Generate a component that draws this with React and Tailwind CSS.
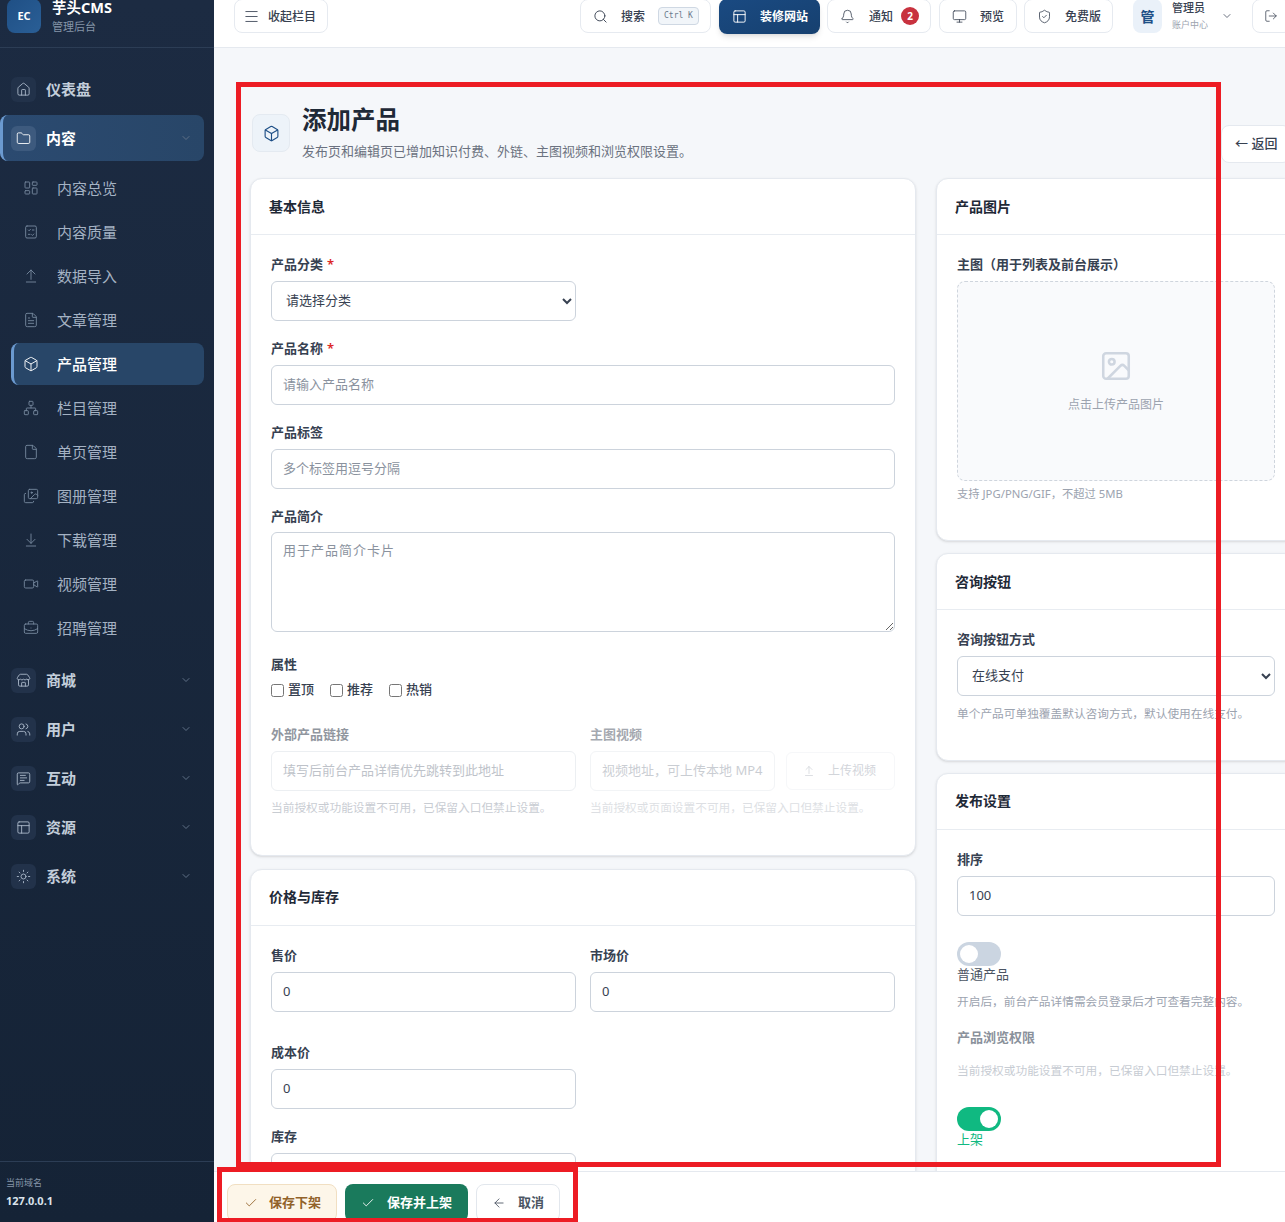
import React from "react";
import {
  Home, Folder, LayoutDashboard, ArrowUpFromLine, FileText, Box, Network, File, Images, ArrowDownToLine,
  Video, BriefcaseBusiness, Store, Users, MessageSquareText, PanelsTopLeft, Sun, ChevronDown, Menu,
  Search, Bell, Monitor, ShieldCheck, LogOut, Check, ArrowLeft, Image as ImageIcon,
} from "lucide-react";

const FONT = { fontFamily: '"Noto Sans", "Noto Sans CJK SC", sans-serif' };

function ChecklistIcon() {
  return (
    <svg width="16" height="16" viewBox="0 0 24 24" fill="none" stroke="currentColor" strokeWidth="1.4" strokeLinecap="round" strokeLinejoin="round">
      <rect x="4" y="3" width="16" height="18" rx="2" />
      <path d="M8 9l1.2 1.2 2-2.2M14 9h2.5M8 15.5h2.5M13 16l1.2 1.2 2-2.2" />
    </svg>
  );
}

function TopItem({ icon: Icon, label, active, noChevron }) {
  return (
    <div className={`flex items-center h-[46px] shrink-0 rounded-lg ${active ? "bg-gradient-to-r from-[#2b4a70] to-[#284668] border-l-[3px] border-[#6b9ad0] pl-2" : "pl-[11px]"} pr-[12px]`}>
      <span className={`w-[25px] h-[25px] rounded-md flex items-center justify-center ${active ? "bg-[#3d5a7e] text-white" : "bg-[#22324a] text-[#aebccd]"}`}>
        <Icon size={15} strokeWidth={1.4} />
      </span>
      <span className={`ml-[10px] text-[15px] font-bold ${active ? "text-white" : "text-[#c3ceda]"}`}>{label}</span>
      {!noChevron && <ChevronDown size={12} className="ml-auto text-[#5f7086]" />}
    </div>
  );
}

function SubItem({ icon: Icon, label, active }) {
  return (
    <div className={`flex items-center h-[42px] shrink-0 rounded-lg ml-[11px] ${active ? "bg-[#284668] border-l-[3px] border-[#6b9ad0] pl-[9px]" : "pl-[12px]"}`}>
      <span className={`w-[16px] flex justify-center ${active ? "text-white" : "text-[#74869c]"}`}>
        <Icon size={16} strokeWidth={1.4} />
      </span>
      <span className={`ml-[18px] text-[15px] ${active ? "text-white font-medium" : "text-[#a4b2c3]"}`}>{label}</span>
    </div>
  );
}

function Sidebar() {
  return (
    <aside className="w-[214px] shrink-0 h-full flex flex-col bg-gradient-to-b from-[#1c2b42] to-[#152336]">
      <div className="h-[48px] shrink-0 border-b border-[#2c3d55] pl-[7px] flex items-start overflow-hidden">
        <div className="-mt-px w-[34px] h-[34px] rounded-lg bg-gradient-to-br from-[#1f4f85] to-[#2a5f96] flex items-center justify-center text-white text-[11px] font-bold">EC</div>
        <div className="ml-[11px] -mt-[3px]">
          <div className="text-[14.5px] leading-[20px] font-bold text-white">芋头CMS</div>
          <div className="text-[11px] leading-[14px] mt-[3px] text-[#8595a8]">管理后台</div>
        </div>
      </div>
      <nav className="flex-1 pt-[18px] pr-[10px] flex flex-col overflow-hidden">
        <TopItem icon={Home} label="仪表盘" noChevron />
        <div className="h-[3px] shrink-0" />
        <TopItem icon={Folder} label="内容" active />
        <div className="flex flex-col gap-[2px] mt-[6px] mb-[8px]">
          <SubItem icon={LayoutDashboard} label="内容总览" />
          <SubItem icon={ChecklistIcon} label="内容质量" />
          <SubItem icon={ArrowUpFromLine} label="数据导入" />
          <SubItem icon={FileText} label="文章管理" />
          <SubItem icon={Box} label="产品管理" active />
          <SubItem icon={Network} label="栏目管理" />
          <SubItem icon={File} label="单页管理" />
          <SubItem icon={Images} label="图册管理" />
          <SubItem icon={ArrowDownToLine} label="下载管理" />
          <SubItem icon={Video} label="视频管理" />
          <SubItem icon={BriefcaseBusiness} label="招聘管理" />
        </div>
        <div className="flex flex-col gap-[3px]">
          <TopItem icon={Store} label="商城" />
          <TopItem icon={Users} label="用户" />
          <TopItem icon={MessageSquareText} label="互动" />
          <TopItem icon={PanelsTopLeft} label="资源" />
          <TopItem icon={Sun} label="系统" />
        </div>
      </nav>
      <div className="h-[61px] shrink-0 border-t border-[#2c3d55] pl-[6px] pt-[13px]">
        <div className="text-[9px] leading-[16px] text-[#8595a8]">当前域名</div>
        <div className="text-[11px] leading-[16px] mt-[2px] font-bold text-[#dbe3ec]">127.0.0.1</div>
      </div>
    </aside>
  );
}

function HeadBtn({ children, className = "" }) {
  return <div className={`h-[34px] -mt-px rounded-lg border border-[#e6eaf0] bg-white flex items-center text-[12px] font-medium text-[#374151] shrink-0 ${className}`}>{children}</div>;
}

function Header() {
  return (
    <header className="h-[48px] shrink-0 bg-white border-b border-[#e5e9ef] flex items-start pl-[20px] relative overflow-hidden">
      <HeadBtn className="w-[94px] pl-[8px]">
        <Menu size={17} strokeWidth={1.2} />
        <span className="ml-[8px] mt-px">收起栏目</span>
      </HeadBtn>
      <div className="ml-[252px] flex items-start">
        <HeadBtn className="w-[131px] pl-[12px] bg-[#f8fafc]">
          <Search size={15} strokeWidth={1.5} />
          <span className="ml-[13px] mt-[2px]">搜索</span>
          <span className="ml-[13px] h-[18px] px-[5px] rounded border border-[#cfd8e3] bg-[#f1f5f9] text-[8px] text-[#6b7a8c] flex items-center" style={{ fontFamily: '"DejaVu Sans Mono", monospace' }}>Ctrl K</span>
        </HeadBtn>
        <div className="ml-[8px] -mt-px w-[101px] h-[35px] rounded-lg bg-gradient-to-br from-[#1a4a82] to-[#16406f] shadow-md flex items-center pl-[13px] text-white text-[12px] font-bold shrink-0">
          <PanelsTopLeft size={15} strokeWidth={1.5} />
          <span className="ml-[13px]">装修网站</span>
        </div>
        <HeadBtn className="ml-[7px] w-[104px] pl-[12px]">
          <Bell size={15} strokeWidth={1.3} />
          <span className="ml-[14px] mt-[2px]">通知</span>
          <span className="ml-[8px] w-[18px] h-[18px] rounded-full bg-[#c8323f] text-white text-[10px] font-bold flex items-center justify-center">2</span>
        </HeadBtn>
        <HeadBtn className="ml-[8px] w-[78px] pl-[12px]">
          <Monitor size={15} strokeWidth={1.3} />
          <span className="ml-[13px] mt-[2px]">预览</span>
        </HeadBtn>
        <HeadBtn className="ml-[7px] w-[89px] pl-[12px]">
          <ShieldCheck size={15} strokeWidth={1.3} />
          <span className="ml-[13px] mt-[2px]">免费版</span>
        </HeadBtn>
        <div className="ml-[20px] flex items-center h-[34px] -mt-px shrink-0">
          <span className="w-[29px] h-[34px] rounded-lg bg-[#eaf1f9] text-[#1d4f86] text-[14px] font-bold flex items-center justify-center">管</span>
          <div className="ml-[10px] w-[48px]">
            <div className="text-[11px] leading-[14px] -mt-px font-medium text-[#374151]">管理员</div>
            <div className="text-[9px] leading-[12px] mt-[4px] text-[#9ca3af]">账户中心</div>
          </div>
          <ChevronDown size={12} className="ml-[1px] text-[#6b7280]" />
        </div>
        <HeadBtn className="ml-[19px] w-[40px] pl-[11px]"><LogOut size={14} strokeWidth={1.3} /></HeadBtn>
      </div>
    </header>
  );
}

function Card({ title, className = "", titleClass = "", children }) {
  return (
    <section className={`rounded-xl border border-[#e5e9ef] bg-white shadow-sm shrink-0 ${className}`}>
      <div className={`h-[56px] border-b border-[#e8ecf1] flex items-center pl-[18px] text-[14px] font-bold text-[#1f2937] ${titleClass}`}>{title}</div>
      <div className="px-[20px] pt-[19px]">{children}</div>
    </section>
  );
}

function Label({ children, required, muted, className = "" }) {
  return (
    <div className={`h-[20px] leading-[20px] text-[13px] font-semibold mb-[7px] ${muted ? "text-[#9097a1]" : "text-[#374151]"} ${className}`}>
      {children}
      {required && <span className="ml-[4px] text-[#dc2626]">*</span>}
    </div>
  );
}

const inputBase = "block h-[40px] rounded-md border bg-white px-[11px] pb-[2px] text-[13px] text-[#374151] placeholder:text-[#8a929e] outline-none";
const inputCls = `${inputBase} w-full border-[#ccd3dc]`;

function Field({ label, required, placeholder, value, className = "" }) {
  return (
    <div className={className}>
      <Label required={required}>{label}</Label>
      <input className={inputCls} placeholder={placeholder} defaultValue={value} />
    </div>
  );
}

function LeftColumn() {
  return (
    <div className="w-[666px] shrink-0 flex flex-col gap-[13px]">
      <Card title="基本信息" className="h-[678px]">
        <Label required>产品分类</Label>
        <select className="block w-[305px] h-[40px] rounded-md border border-[#ccd3dc] bg-white pl-[10px] pb-[2px] text-[13px] text-[#374151] outline-none mb-[17px]" defaultValue="">
          <option value="">请选择分类</option>
        </select>
        <Field label="产品名称" required placeholder="请输入产品名称" className="mb-[17px]" />
        <Field label="产品标签" placeholder="多个标签用逗号分隔" className="mb-[17px]" />
        <div className="h-[20px] leading-[20px] text-[13px] font-semibold mb-[6px] text-[#374151]">产品简介</div>
        <textarea className="block w-full h-[100px] rounded-md border border-[#ccd3dc] bg-white px-[11px] py-[8px] text-[13px] tracking-[1px] text-[#374151] placeholder:text-[#8a929e] outline-none mb-[22px]" placeholder="用于产品简介卡片" />
        <div className="h-[20px] leading-[20px] text-[13px] font-semibold mb-[6px] text-[#374151]">属性</div>
        <div className="flex items-center gap-[16px] h-[20px] mb-[24px] text-[13px] font-medium text-[#374151]">
          {["置顶", "推荐", "热销"].map((t) => (
            <label key={t} className="flex items-center gap-[4px]">
              <input type="checkbox" className="w-[13px] h-[13px] m-0" />
              {t}
            </label>
          ))}
        </div>
        <div className="flex gap-[14px]">
          <div className="w-[305px] opacity-55">
            <Label>外部产品链接</Label>
            <input disabled className={`${inputBase} w-full border-[#dde2e8]`} placeholder="填写后前台产品详情优先跳转到此地址" />
            <div className="mt-[7px] text-[11.7px] leading-[18px] text-[#9ca3af] whitespace-nowrap">当前授权或功能设置不可用，已保留入口但禁止设置。</div>
          </div>
          <div className="w-[305px] opacity-45">
            <Label>主图视频</Label>
            <div className="flex gap-[11px]">
              <input disabled className={`${inputBase} w-[185px] border-[#e3e7ec]`} placeholder="视频地址，可上传本地 MP4" />
              <div className="w-[109px] h-[38px] mt-px rounded-md border border-[#eceff3] flex items-center pl-[16px] text-[12px] text-[#9ca3af] whitespace-nowrap">
                <ArrowUpFromLine size={12} strokeWidth={1.5} />
                <span className="ml-[13px]">上传视频</span>
              </div>
            </div>
            <div className="mt-[7px] text-[11.7px] leading-[18px] text-[#b4bac3] whitespace-nowrap">当前授权或页面设置不可用，已保留入口但禁止设置。</div>
          </div>
        </div>
      </Card>
      <Card title="价格与库存" className="h-[400px]" titleClass="pb-[2px]">
        <div className="grid grid-cols-[305px_305px] gap-x-[14px] mb-[30px]">
          <Field label="售价" value="0" />
          <Field label="市场价" value="0" />
        </div>
        <Field label="成本价" value="0" className="w-[305px] mb-[17px]" />
        <Field label="库存" value="0" className="w-[305px]" />
      </Card>
    </div>
  );
}

function Toggle({ on }) {
  return (
    <div className={`w-[44px] h-[24px] rounded-full p-[3px] flex ${on ? "bg-[#10b981] justify-end" : "bg-[#cbd5e1]"}`}>
      <span className="w-[18px] h-[18px] rounded-full bg-white" />
    </div>
  );
}

function RightColumn() {
  return (
    <div className="w-[360px] shrink-0 flex flex-col gap-[12px]">
      <Card title="产品图片" className="h-[363px]">
        <Label>主图（用于列表及前台展示）</Label>
        <div className="w-[318px] h-[200px] rounded-lg border border-dashed border-[#cfd5dd] bg-[#f9fafc] flex flex-col items-center justify-center">
          <ImageIcon size={34} strokeWidth={1.8} className="text-[#cfd6e0]" />
          <div className="mt-[13px] text-[12px] leading-[18px] text-[#9ca3af]">点击上传产品图片</div>
        </div>
        <div className="mt-[4px] text-[11.3px] leading-[18px] text-[#9ca3af]">支持 JPG/PNG/GIF，不超过 5MB</div>
      </Card>
      <Card title="咨询按钮" className="h-[208px]">
        <Label>咨询按钮方式</Label>
        <select className="block w-[318px] h-[40px] rounded-md border border-[#ccd3dc] bg-white pl-[10px] pb-[2px] text-[13px] text-[#374151] outline-none" defaultValue="在线支付">
          <option>在线支付</option>
        </select>
        <div className="mt-[8px] text-[11.7px] leading-[18px] text-[#9ca3af] whitespace-nowrap">单个产品可单独覆盖默认咨询方式，默认使用在线支付。</div>
      </Card>
      <Card title="发布设置" className="h-[500px]" titleClass="pb-[2px]">
        <Label>排序</Label>
        <input className={`${inputBase} w-[318px] border-[#ccd3dc]`} defaultValue="100" />
        <div className="mt-[26px]"><Toggle /></div>
        <div className="text-[13px] leading-[16px] text-[#4b5563]">普通产品</div>
        <div className="mt-[10px] text-[11.7px] leading-[18px] text-[#9ca3af] whitespace-nowrap">开启后，前台产品详情需会员登录后才可查看完整内容。</div>
        <div className="mt-[17px] h-[20px] leading-[20px] text-[13px] font-semibold text-[#8a919b]">产品浏览权限</div>
        <div className="mt-[14px] text-[11.7px] leading-[18px] text-[#c7ccd3] whitespace-nowrap">当前授权或功能设置不可用，已保留入口但禁止设置。</div>
        <div className="mt-[28px]"><Toggle on /></div>
        <div className="text-[13px] leading-[16px] text-[#10b981]">上架</div>
      </Card>
    </div>
  );
}

function FootBtn({ icon: Icon, children, className = "", gap = "ml-[12px]" }) {
  return (
    <div className={`h-[38px] rounded-lg flex items-center text-[13px] font-semibold shrink-0 ${className}`}>
      <Icon size={14} strokeWidth={1.5} />
      <span className={gap}>{children}</span>
    </div>
  );
}

export default function App() {
  return (
    <div className="relative w-[1285px] h-[1222px] overflow-hidden flex bg-[#f5f7fa]" style={FONT}>
      <Sidebar />
      <main className="flex-1 min-w-0 flex flex-col h-full">
        <Header />
        <div className="flex-1 min-h-0 overflow-hidden pl-[36px] pt-[66px]">
          <div className="relative flex items-start h-[64px] w-[1035px]">
            <span className="w-[38px] h-[38px] ml-[2px] rounded-lg border border-[#e4eaf1] bg-[#edf3f9] text-[#1d4f86] flex items-center justify-center">
              <Box size={17} strokeWidth={1.6} />
            </span>
            <div className="ml-[12px] -mt-[11px]">
              <div className="text-[24.5px] leading-[34px] font-bold text-[#1f2937]">添加产品</div>
              <div className="text-[13px] leading-[20px] mt-[4px] text-[#6b7280]">发布页和编辑页已增加知识付费、外链、主图视频和浏览权限设置。</div>
            </div>
            <div className="absolute left-[971px] top-[11px] w-[70px] h-[38px] rounded-lg border border-[#e5e9ef] bg-white flex items-center pl-[13px] text-[13px] font-medium text-[#374151]">← 返回</div>
          </div>
          <div className="flex gap-[20px]">
            <LeftColumn />
            <RightColumn />
          </div>
        </div>
        <footer className="h-[51px] shrink-0 bg-white border-t border-[#e5e9ef] flex items-start pl-[13px] pt-[12px] gap-[8px] overflow-hidden">
          <FootBtn icon={Check} gap="ml-[11px]" className="w-[110px] pl-[16px] border border-[#f1dfc2] bg-[#fdf6e9] text-[#92622a]">保存下架</FootBtn>
          <FootBtn icon={Check} className="w-[123px] pl-[16px] bg-[#1a7a5c] text-white">保存并上架</FootBtn>
          <FootBtn icon={ArrowLeft} className="w-[84px] pl-[15px] border border-[#e2e7ed] bg-white text-[#4b5563]">取消</FootBtn>
        </footer>
      </main>
      <div className="absolute left-[236px] top-[82px] w-[985px] h-[1085px] border-[5px] border-[#ed1c24] pointer-events-none" />
      <div className="absolute left-[217px] top-[1167px] w-[361px] h-[56px] border-[5px] border-[#ed1c24] pointer-events-none" />
    </div>
  );
}
